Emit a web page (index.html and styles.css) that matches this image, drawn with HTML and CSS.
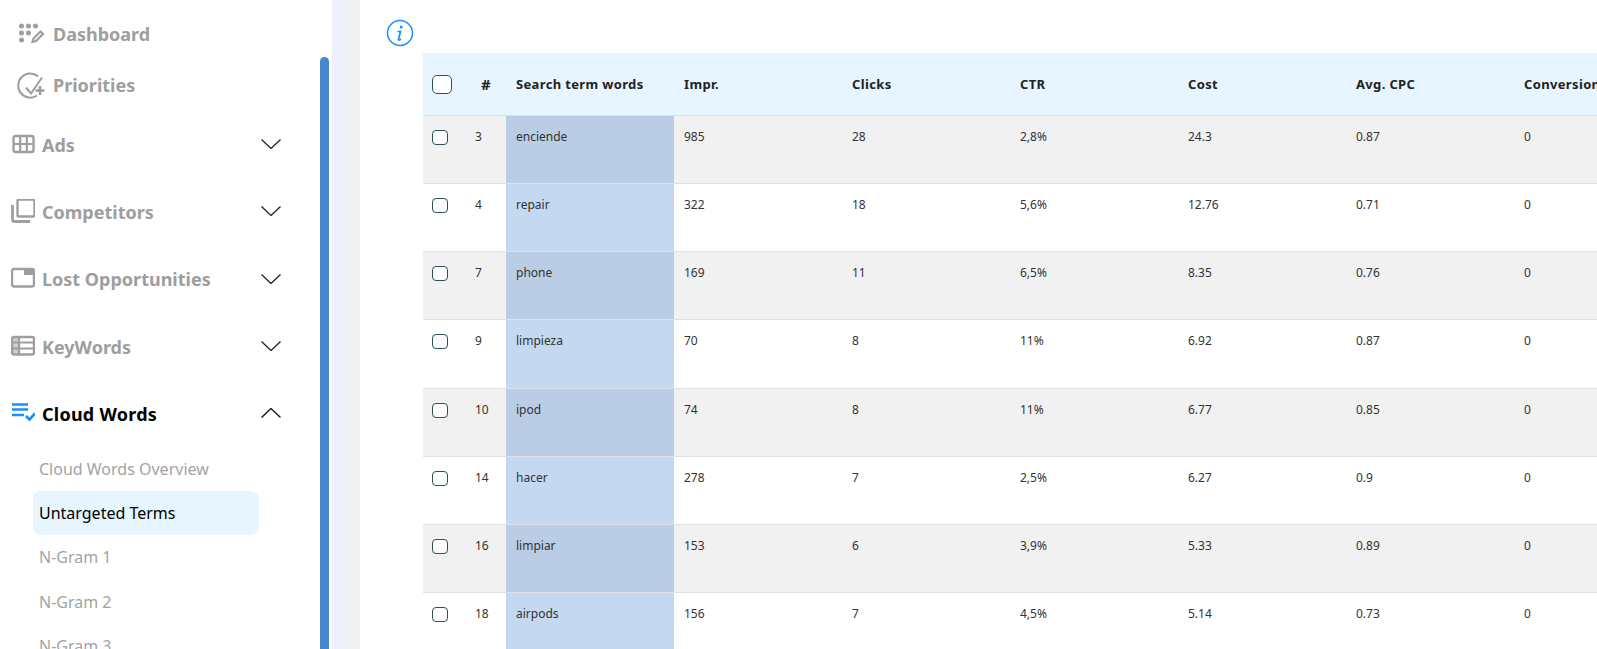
FILE: index.html
```html
<!DOCTYPE html>
<html lang="en">
<head>
    <meta charset="UTF-8">
    <meta name="viewport" content="width=device-width, initial-scale=1.0">
    <title>Untargeted Terms</title>
    <link rel="stylesheet" href="styles.css">
</head>
<body>

<aside class="sidebar">
    <nav class="nav">
        <a class="nav-top">
            <svg class="icon-top" width="40" height="30" viewBox="0 0 40 30">
                <g fill="#9e9e9e">
                    <circle cx="8.500" cy="7" r="2.500"/><circle cx="15.500" cy="7" r="2.500"/><circle cx="22.500" cy="7" r="2.500"/>
                    <circle cx="8.500" cy="14" r="2.500"/><circle cx="15.500" cy="14" r="2.500"/>
                    <circle cx="8.500" cy="21" r="2.500"/>
                </g>
                <path d="M19.500 23l1-3.500 7-7 2.500 2.500-7 7z" fill="none" stroke="#9e9e9e" stroke-width="2.200"/>
            </svg>
            Dashboard
        </a>
        <a class="nav-top">
            <svg class="icon-top" width="40" height="30" viewBox="0 0 40 30">
                <path d="M25 6.500a12 12 0 1 0-1 19" fill="none" stroke="#9e9e9e" stroke-width="2"/>
                <path d="M13 17.500l5 6L29 7.500" fill="none" stroke="#9e9e9e" stroke-width="2"/>
                <path d="M22.500 20.500h9M27 16v9" fill="none" stroke="#9e9e9e" stroke-width="2.500"/>
            </svg>
            Priorities
        </a>

        <a class="nav-group">
            <svg class="icon-group" width="24" height="24" viewBox="0 0 24 24">
                <rect x="2.500" y="4" width="20" height="16" rx="2" fill="none" stroke="#9e9e9e" stroke-width="2.400"/>
                <path d="M2.500 12h20M9.200 4v16M15.800 4v16" stroke="#9e9e9e" stroke-width="2.200"/>
            </svg>
            <span class="nav-label">Ads</span>
            <svg class="chevron" width="20" height="10" viewBox="0 0 20 10"><path d="M0.500 0.500L10 9.500l9.500-9" fill="none" stroke="#222" stroke-width="1.300"/></svg>
        </a>
        <a class="nav-group">
            <svg class="icon-group" width="24" height="24" viewBox="0 0 24 24">
                <rect x="6.500" y="0.500" width="17" height="17" rx="1.500" fill="none" stroke="#9e9e9e" stroke-width="2.400"/>
                <path d="M1.500 6v14.500a2 2 0 0 0 2 2H19" fill="none" stroke="#9e9e9e" stroke-width="2.800"/>
            </svg>
            <span class="nav-label">Competitors</span>
            <svg class="chevron" width="20" height="10" viewBox="0 0 20 10"><path d="M0.500 0.500L10 9.500l9.500-9" fill="none" stroke="#222" stroke-width="1.300"/></svg>
        </a>
        <a class="nav-group">
            <svg class="icon-group" width="24" height="24" viewBox="0 0 24 24">
                <rect x="1" y="3" width="22" height="17.500" rx="2" fill="none" stroke="#9e9e9e" stroke-width="2.400"/>
                <rect x="13" y="3" width="10" height="6" fill="#9e9e9e"/>
            </svg>
            <span class="nav-label">Lost Opportunities</span>
            <svg class="chevron" width="20" height="10" viewBox="0 0 20 10"><path d="M0.500 0.500L10 9.500l9.500-9" fill="none" stroke="#222" stroke-width="1.300"/></svg>
        </a>
        <a class="nav-group">
            <svg class="icon-group" width="24" height="24" viewBox="0 0 24 24">
                <rect x="1" y="3" width="22" height="17.500" rx="2" fill="none" stroke="#9e9e9e" stroke-width="2.400"/>
                <path d="M1 8.500h22M1 14.500h22M8 3v17.500" stroke="#9e9e9e" stroke-width="2.200"/>
                <path d="M1 3h7v17.500H1z" fill="#9e9e9e" fill-opacity=".5"/>
            </svg>
            <span class="nav-label">KeyWords</span>
            <svg class="chevron" width="20" height="10" viewBox="0 0 20 10"><path d="M0.500 0.500L10 9.500l9.500-9" fill="none" stroke="#222" stroke-width="1.300"/></svg>
        </a>
        <a class="nav-group active">
            <svg class="icon-group" width="24" height="24" viewBox="0 0 24 24">
                <path d="M1 3.500h16M1 8.500h16M1 14h12" stroke="#1890ff" stroke-width="2.400"/>
                <path d="M15 15l3.500 3.500L24 12.500" fill="none" stroke="#1890ff" stroke-width="2.600"/>
            </svg>
            <span class="nav-label nav-label-on">Cloud Words</span>
            <svg class="chevron" width="20" height="10" viewBox="0 0 20 10"><path d="M0.500 9.500L10 0.500l9.500 9" fill="none" stroke="#111" stroke-width="1.300"/></svg>
        </a>

        <div class="submenu">
            <a class="sub-item">Cloud Words Overview</a>
            <a class="sub-item selected">Untargeted Terms</a>
            <a class="sub-item">N-Gram 1</a>
            <a class="sub-item">N-Gram 2</a>
            <a class="sub-item">N-Gram 3</a>
        </div>
    </nav>
    <div class="scroll-track"><div class="scroll-thumb"></div></div>
</aside>

<div class="gutter-a"></div>
<div class="gutter-b"></div>

<main class="main">
    <svg class="info" width="28" height="28" viewBox="0 0 28 28">
        <circle cx="14" cy="14" r="12.500" fill="none" stroke="#1890ff" stroke-width="1.500"/>
        <circle cx="15.200" cy="8" r="1.500" fill="#1890ff"/>
        <path d="M11.500 12.500h3l-2 7.500q-.3 1.200 1 1l1.500-1" fill="none" stroke="#1890ff" stroke-width="1.700"/>
    </svg>

    <table class="terms">
        <colgroup>
            <col class="col-check">
            <col class="col-num">
            <col class="col-data" span="7">
        </colgroup>
        <thead>
            <tr>
                <th class="cell-check"><input type="checkbox" class="check check-big"></th>
                <th class="cell-hash">#</th>
                <th>Search term words</th>
                <th>Impr.</th>
                <th>Clicks</th>
                <th>CTR</th>
                <th>Cost</th>
                <th>Avg. CPC</th>
                <th>Conversions</th>
            </tr>
        </thead>
        <tbody>
            <tr>
                <td class="cell-check"><input type="checkbox" class="check"></td>
                <td class="cell-num">3</td><td class="word">enciende</td>
                <td>985</td><td>28</td><td>2,8%</td><td>24.3</td><td>0.87</td><td>0</td>
            </tr>
            <tr>
                <td class="cell-check"><input type="checkbox" class="check"></td>
                <td class="cell-num">4</td><td class="word">repair</td>
                <td>322</td><td>18</td><td>5,6%</td><td>12.76</td><td>0.71</td><td>0</td>
            </tr>
            <tr>
                <td class="cell-check"><input type="checkbox" class="check"></td>
                <td class="cell-num">7</td><td class="word">phone</td>
                <td>169</td><td>11</td><td>6,5%</td><td>8.35</td><td>0.76</td><td>0</td>
            </tr>
            <tr>
                <td class="cell-check"><input type="checkbox" class="check"></td>
                <td class="cell-num">9</td><td class="word">limpieza</td>
                <td>70</td><td>8</td><td>11%</td><td>6.92</td><td>0.87</td><td>0</td>
            </tr>
            <tr>
                <td class="cell-check"><input type="checkbox" class="check"></td>
                <td class="cell-num">10</td><td class="word">ipod</td>
                <td>74</td><td>8</td><td>11%</td><td>6.77</td><td>0.85</td><td>0</td>
            </tr>
            <tr>
                <td class="cell-check"><input type="checkbox" class="check"></td>
                <td class="cell-num">14</td><td class="word">hacer</td>
                <td>278</td><td>7</td><td>2,5%</td><td>6.27</td><td>0.9</td><td>0</td>
            </tr>
            <tr>
                <td class="cell-check"><input type="checkbox" class="check"></td>
                <td class="cell-num">16</td><td class="word">limpiar</td>
                <td>153</td><td>6</td><td>3,9%</td><td>5.33</td><td>0.89</td><td>0</td>
            </tr>
            <tr>
                <td class="cell-check"><input type="checkbox" class="check"></td>
                <td class="cell-num">18</td><td class="word">airpods</td>
                <td>156</td><td>7</td><td>4,5%</td><td>5.14</td><td>0.73</td><td>0</td>
            </tr>
        </tbody>
    </table>
</main>

</body>
</html>
```

FILE: styles.css
```css
html, body {
    height: 100%;
}
body {
    margin: 0;
    display: flex;
    overflow: hidden;
    background: white;
    font-family: "Noto Sans", "Open Sans", sans-serif;
}

/* sidebar */
.sidebar {
    display: flex;
    flex: none;
    width: 332px;
    height: 100%;
    overflow: hidden;
}
.nav {
    width: 320px;
    padding-top: 8px;
}
.nav-top {
    display: flex;
    align-items: center;
    height: 51px;
    padding-left: 13px;
    font-size: 18px;
    font-weight: 700;
    color: #9e9e9e;
}
.nav-group {
    display: flex;
    align-items: center;
    height: 67.300px;
    padding-left: 11px;
    font-size: 18px;
    font-weight: 700;
    color: #9e9e9e;
}
.nav-group.active {
    color: black;
}
.icon-group {
    flex: none;
    margin-right: 7px;
}
.nav-label {
    width: 219px;
    margin-top: 2px;
}
.nav-label-on {
    letter-spacing: 0.250px;
}
.chevron {
    flex: none;
    margin-top: 1px;
}
.submenu {
    padding: 0 61px 0 33px;
}
.sub-item {
    display: flex;
    align-items: center;
    height: 44.300px;
    padding-left: 6px;
    border-radius: 8px;
    font-size: 16px;
    color: #a3a3a3;
}
.sub-item.selected {
    background: #e6f5ff;
    color: black;
}
.scroll-track {
    width: 12px;
    padding-top: 57px;
}
.scroll-thumb {
    width: 9px;
    height: 700px;
    border-radius: 5px 5px 0 0;
    background: #4689cf;
}

.gutter-a {
    flex: none;
    width: 14px;
    background: #edf0f9;
}
.gutter-b {
    flex: none;
    width: 14px;
    background: #f0f0f0;
}

/* main */
.main {
    flex: 1;
    min-width: 0;
    padding-top: 19px;
    overflow: hidden;
}
.info {
    display: block;
    margin-left: 26px;
}
.terms {
    table-layout: fixed;
    width: 1259px;
    margin: 6px 0 0 63px;
    border-collapse: collapse;
    font-size: 12px;
    color: #333;
}
.col-check {
    width: 43px;
}
.col-num {
    width: 40px;
}
.col-data {
    width: 168px;
}
.terms th {
    height: 62px;
    padding: 0 10px;
    background: #e6f5ff;
    border-bottom: 1px solid #dcdfe4;
    text-align: left;
    font-size: 13px;
    letter-spacing: 0.350px;
    font-weight: 700;
    color: #222;
    white-space: nowrap;
}
.terms td {
    height: 68px;
    padding: 12px 10px 0;
    box-sizing: border-box;
    border-bottom: 1px solid #dfe1e6;
    vertical-align: top;
    white-space: nowrap;
}
/* the reference rows are a fraction over 68px, the table gains it back here */
.terms tbody tr:nth-child(4) td {
    height: 69px;
}
.terms tbody tr:nth-child(odd) td {
    background: #f1f1f1;
}
.terms tbody tr:nth-child(odd) td.word {
    background: #bacde4;
}
.terms td.word,
.terms tbody tr:nth-child(even) td.word {
    background: #c4d8f0;
}
.terms .cell-check {
    padding: 0 0 0 9px;
}
.terms td.cell-check {
    padding-top: 14px;
}
.terms .cell-hash {
    padding: 0 0 0 15px;
    font-size: 15px;
}
.terms .cell-num {
    padding-left: 9px;
    padding-right: 0;
}
.check {
    appearance: none;
    display: block;
    width: 16px;
    height: 15px;
    margin: 0;
    box-sizing: border-box;
    border: 1px solid #2c5156;
    border-radius: 4px;
    background: white;
}
.check-big {
    width: 20px;
    height: 19px;
    border-radius: 5px;
}
```
